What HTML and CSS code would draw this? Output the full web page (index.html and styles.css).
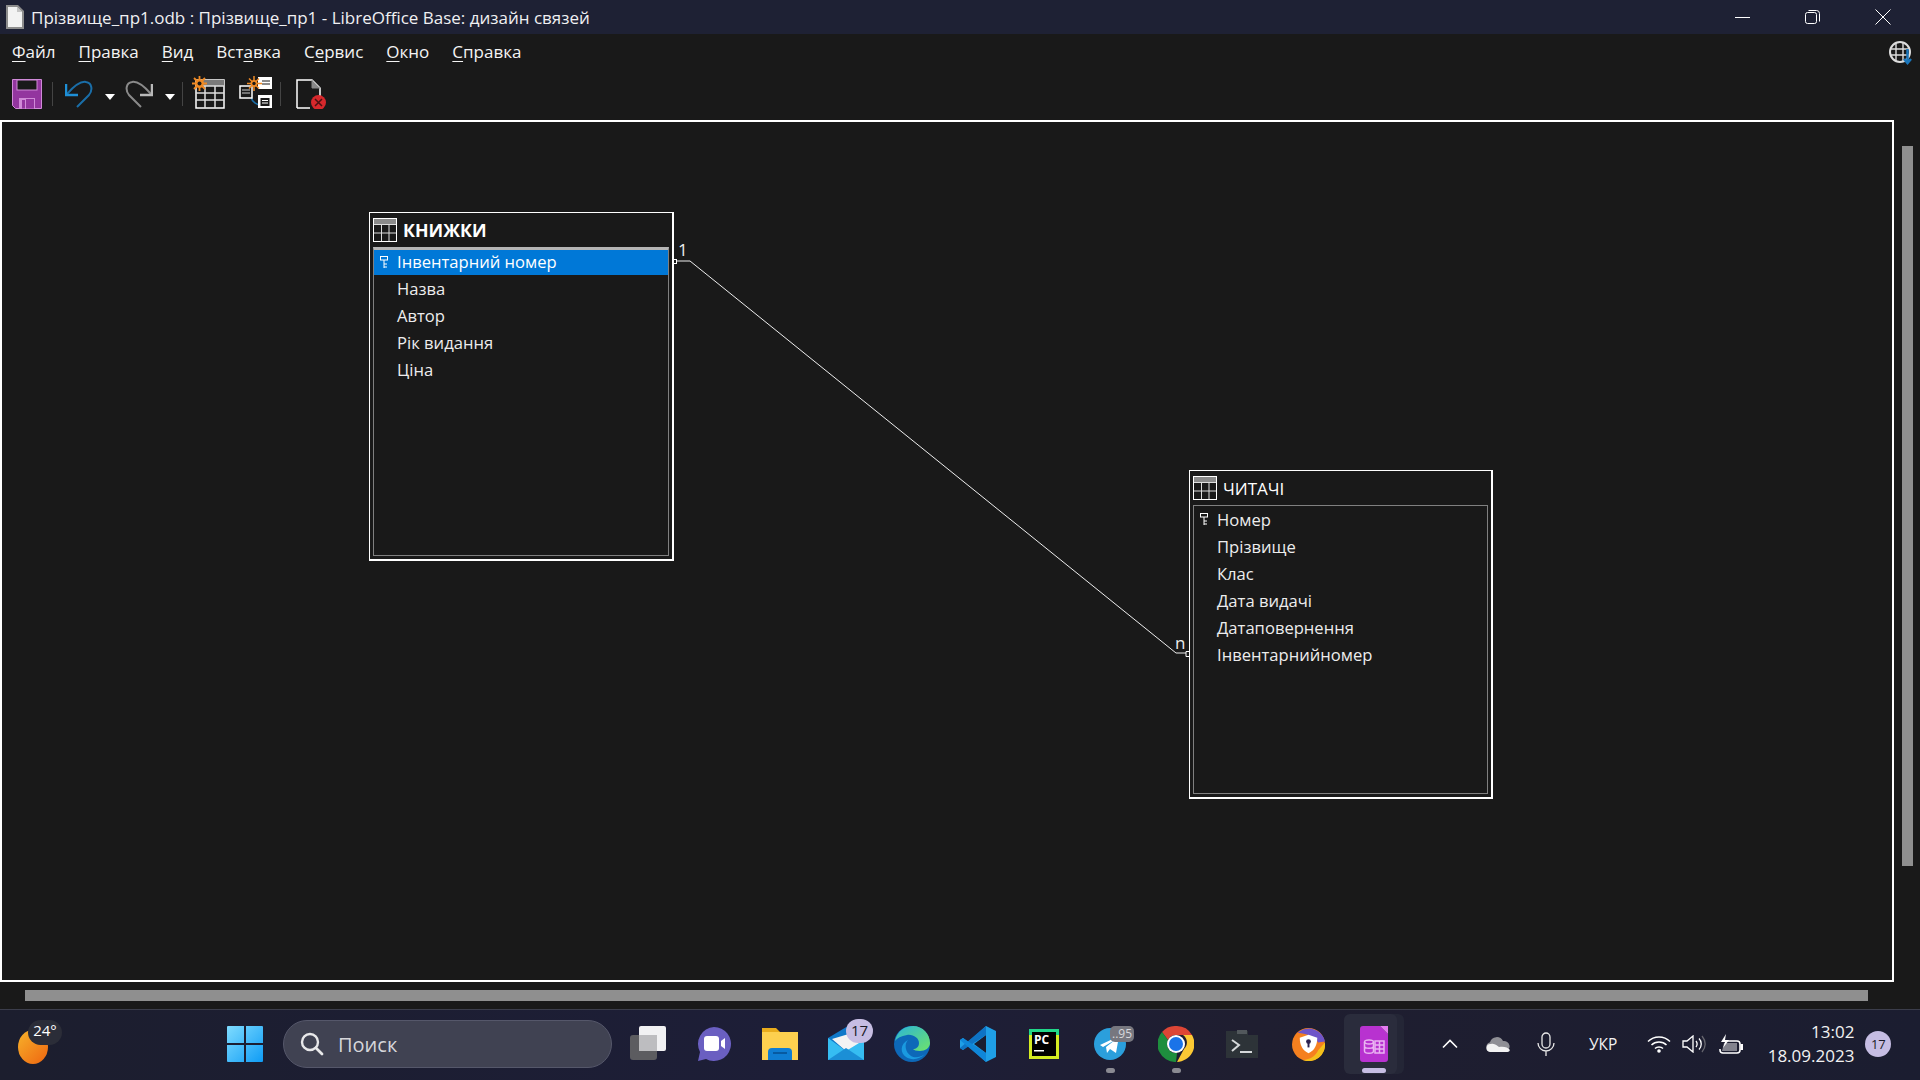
FILE: index.html
```html
<!DOCTYPE html>
<html lang="uk">
<head>
<meta charset="utf-8">
<title>LibreOffice Base</title>
<link rel="stylesheet" href="styles.css">
</head>
<body>
<div class="window">
  <header class="titlebar">
    <svg class="doc-icon" viewBox="0 0 20 24"><path d="M1 0h12l6 6v18H1z" fill="#8d8d8d"/><path d="M3 2h9l5 5v15H3z" fill="#f2f2f2"/><path d="M12 2l5 5h-5z" fill="#c4c4c4"/></svg>
    <span class="title-text">Прізвище_пр1.odb : Прізвище_пр1 - LibreOffice Base: дизайн связей</span>
    <div class="winctl">
      <svg class="ctl" viewBox="0 0 16 16"><path d="M0 8.500h15" stroke="#fff" fill="none"/></svg>
      <svg class="ctl" viewBox="0 0 16 16"><rect x="0.500" y="3.500" width="11" height="11" rx="2" stroke="#fff" fill="none"/><path d="M3.500 1.500h8a3 3 0 0 1 3 3v8" stroke="#fff" fill="none"/></svg>
      <svg class="ctl" viewBox="0 0 16 16"><path d="M0.500 0.500l15 15M15.500 0.500l-15 15" stroke="#fff" fill="none"/></svg>
    </div>
  </header>
  <nav class="menubar">
    <span class="mi"><u>Ф</u>айл</span>
    <span class="mi"><u>П</u>равка</span>
    <span class="mi"><u>В</u>ид</span>
    <span class="mi">Вст<u>а</u>вка</span>
    <span class="mi">С<u>е</u>рвис</span>
    <span class="mi"><u>О</u>кно</span>
    <span class="mi"><u>С</u>правка</span>
    <svg class="globe" viewBox="0 0 24 24"><circle cx="11" cy="11" r="10" fill="none" stroke="#ddd" stroke-width="2"/><path d="M1 8h20M1 14h20M7 2v18M14 2v18" stroke="#ddd" stroke-width="1.400"/><path d="M18.500 8v13M15 18l3.500 4 3.500-4" stroke="#1a76bb" stroke-width="2.500" fill="none"/></svg>
  </nav>
  <div class="toolbar">
    <svg class="t-save" viewBox="0 0 30 30"><path d="M0.500 0.500h29v29h-26l-3-3z" fill="#93359f" stroke="#d08ad8"/><rect x="5" y="1" width="20" height="10" fill="#191919" stroke="#d08ad8"/><rect x="7" y="19" width="16" height="10.500" fill="#d08ad8"/><rect x="10" y="21" width="3" height="8.500" fill="#93359f"/><rect x="14" y="20" width="8" height="9.500" fill="#93359f"/></svg>
    <span class="sep"></span>
    <svg class="t-arrow" viewBox="0 0 28 28"><path d="M2 14C10 5 16 1 21 2c6 1 7 8 3 13L12 27" fill="none" stroke="#1a6ea8" stroke-width="2"/><path d="M1 4v11h12" fill="none" stroke="#1e8fd6" stroke-width="2.500"/></svg>
    <span class="caret"></span>
    <svg class="t-arrow t-redo" viewBox="0 0 28 28"><path d="M26 14C18 5 12 1 7 2 1 3 0 10 4 15l12 12" fill="none" stroke="#8a8a8a" stroke-width="2"/><path d="M27 4v11H15" fill="none" stroke="#b9b9b9" stroke-width="2.500"/></svg>
    <span class="caret"></span>
    <span class="sep sep-b"></span>
    <svg class="t-table" viewBox="0 0 33 33"><rect x="4" y="4" width="28" height="28" fill="#191919" stroke="#fff" stroke-width="1.500"/><rect x="4" y="4" width="28" height="6" fill="#7a7a7a"/><path d="M4 10h28M4 17h28M4 24h28M13 10v22M23 10v22" stroke="#ddd" stroke-width="1.500"/><path d="M7.500 0v15M0 7.500h15M2 2l11 11M13 2L2 13" stroke="#f08a24" stroke-width="1.800"/><circle cx="7.500" cy="7.500" r="4.500" fill="#f08a24"/><circle cx="7.500" cy="7.500" r="2" fill="#191919"/></svg>
    <svg class="t-rel" viewBox="0 0 33 33"><path d="M12 21c1 5 6 8 10 8" stroke="#1a6ea8" stroke-width="1.500" fill="none"/><rect x="19" y="1" width="14" height="12" fill="#fff"/><path d="M23 5h8M23 8h8" stroke="#191919"/><rect x="1" y="10" width="12" height="12" fill="#191919" stroke="#fff" stroke-width="1.500"/><path d="M3 14h8M3 17h8" stroke="#ccc"/><rect x="19" y="19" width="14" height="13" fill="#fff"/><rect x="21.500" y="22" width="9" height="8" fill="#191919"/><path d="M23 24.500h6M23 27h6" stroke="#fff"/><path d="M15 0v15M8 7.500h15M10 2.500l10 10M20 2.500l-10 10" stroke="#f08a24" stroke-width="1.500"/><circle cx="15" cy="7.500" r="3.500" fill="#f08a24"/><circle cx="15" cy="7.500" r="1.700" fill="#191919"/></svg>
    <span class="sep sep-c"></span>
    <svg class="t-doc" viewBox="0 0 30 30"><path d="M1 29V1h15l8 8v13" fill="none" stroke="#fff" stroke-width="1.500"/><path d="M1 29h13" stroke="#fff" stroke-width="1.500"/><path d="M16 1v8h8" fill="#888" stroke="#888"/><circle cx="22.500" cy="23.500" r="7.500" fill="#d6282c"/><path d="M19 20l7 7M26 20l-7 7" stroke="#4a1012" stroke-width="1.500"/></svg>
  </div>
  <main class="workspace">
    <div class="canvas">
      <svg class="wire" viewBox="0 0 1893 861">
        <path d="M676 141h14L1176 533h10" fill="none" stroke="#eee" stroke-width="1"/>
        <rect x="673.500" y="139.500" width="3" height="4" fill="#191919" stroke="#fff"/>
        <path d="M1189 531.500h-3v5h3" fill="none" stroke="#fff"/>
      </svg>
      <span class="wire-label wl-1">1</span>
      <span class="wire-label wl-n">n</span>

      <section class="rel-table rt-books">
        <div class="rt-head">
          <svg class="rt-icon" viewBox="0 0 24 24"><rect x="0.500" y="0.500" width="23" height="23" fill="#191919" stroke="#fff"/><rect x="1" y="1" width="22" height="5" fill="#8a8a8a"/><path d="M1 6.500h22M1 15h22M8.500 6v17M16 6v17" stroke="#ddd"/></svg>
          <strong class="rt-name">КНИЖКИ</strong>
        </div>
        <ul class="rt-list rt-list-active">
          <li class="rt-row rt-sel"><svg class="key" viewBox="0 0 8 12"><rect x="0.500" y="0.500" width="7" height="3.500" fill="none" stroke="#fff"/><path d="M4 4v8M4 8h3M4 11h3" stroke="#fff"/></svg>Інвентарний номер</li>
          <li class="rt-row">Назва</li>
          <li class="rt-row">Автор</li>
          <li class="rt-row">Рік видання</li>
          <li class="rt-row">Ціна</li>
        </ul>
      </section>

      <section class="rel-table rt-readers">
        <div class="rt-head">
          <svg class="rt-icon" viewBox="0 0 24 24"><rect x="0.500" y="0.500" width="23" height="23" fill="#191919" stroke="#fff"/><rect x="1" y="1" width="22" height="5" fill="#8a8a8a"/><path d="M1 6.500h22M1 15h22M8.500 6v17M16 6v17" stroke="#ddd"/></svg>
          <span class="rt-name rt-plain">ЧИТАЧІ</span>
        </div>
        <ul class="rt-list">
          <li class="rt-row"><svg class="key" viewBox="0 0 8 12"><rect x="0.500" y="0.500" width="7" height="3.500" fill="none" stroke="#fff"/><path d="M4 4v8M4 8h3M4 11h3" stroke="#fff"/></svg>Номер</li>
          <li class="rt-row">Прізвище</li>
          <li class="rt-row">Клас</li>
          <li class="rt-row">Дата видачі</li>
          <li class="rt-row">Датаповернення</li>
          <li class="rt-row">Інвентарнийномер</li>
        </ul>
      </section>
    </div>
    <div class="vscroll"><span class="vthumb"></span></div>
  </main>
  <div class="hscroll"><span class="hthumb"></span></div>
</div>

<footer class="taskbar">
  <div class="weather">
    <span class="sun"></span>
    <span class="temp">24°</span>
  </div>
  <svg class="winlogo" viewBox="0 0 36 36"><defs><linearGradient id="wg" x1="0" y1="0" x2="1" y2="1"><stop offset="0" stop-color="#7fdcff"/><stop offset="1" stop-color="#0f9cf5"/></linearGradient></defs><path d="M0 1a1 1 0 0 1 1-1h16v17H0zM19 0h16a1 1 0 0 1 1 1v16H19zM0 19h17v17H1a1 1 0 0 1-1-1zM19 19h17v16a1 1 0 0 1-1 1H19z" fill="url(#wg)"/></svg>
  <div class="search">
    <svg class="search-ico" viewBox="0 0 24 24"><circle cx="10" cy="10" r="8" fill="none" stroke="#e8e8ea" stroke-width="2.400"/><path d="M16 16l6 6" stroke="#e8e8ea" stroke-width="2.800" stroke-linecap="round"/></svg>
    <span class="search-text">Поиск</span>
  </div>
  <div class="apps">
    <div class="app"><svg class="ico" viewBox="0 0 36 36"><rect x="0" y="9" width="27" height="25" rx="3" fill="#5c5c60"/><rect x="9" y="0" width="27" height="25" rx="2" fill="#f1f1f3"/><path d="M9 9h18v16H9z" fill="#bdbdc0"/></svg></div>
    <div class="app"><svg class="ico" viewBox="0 0 36 36"><path d="M18 1a17 17 0 1 1-8 32l-8 2 2-9A17 17 0 0 1 18 1z" fill="#6a5fc1"/><rect x="8" y="10" width="15" height="15" rx="3" fill="#fff"/><path d="M25 15l4-3v11l-4-3z" fill="#fff"/></svg></div>
    <div class="app"><svg class="ico" viewBox="0 0 36 36"><path d="M0 2h14l4 4h18v28H0z" fill="#e9ac1c"/><path d="M0 6h36v28H0z" fill="#fdd04f"/><path d="M6 34V26a4 4 0 0 1 4-4h16a4 4 0 0 1 4 4v8z" fill="#0f7dd2"/><path d="M11 27h14" stroke="#064f90" stroke-width="1.500"/></svg></div>
    <div class="app"><svg class="ico" viewBox="0 0 36 36"><path d="M0 12L20 0h16v34H0z" fill="#0f78c9"/><path d="M4 13L24 7l8 12-14 6z" fill="#f3f3f3"/><path d="M0 12l18 13 18-11v20H0z" fill="#36bdf2"/><path d="M0 34L18 22l18 12z" fill="#1b8fd6"/></svg><span class="badge">17</span></div>
    <div class="app"><svg class="ico" viewBox="0 0 36 36"><defs><linearGradient id="eg" x1="0" y1="0" x2="1" y2="1"><stop offset="0" stop-color="#2bb3d8"/><stop offset="1" stop-color="#6ee36a"/></linearGradient></defs><circle cx="18" cy="18" r="18" fill="#0d68b8"/><path d="M1 15C3 5 11 0 19 0c10 0 17 8 17 17 0 5-5 8-10 8-4 0-6-1-7-2 3 0 6-2 6-6 0-5-6-9-12-8C7 10 3 12 1 15z" fill="url(#eg)"/><path d="M14 14c-4 4-3 12 3 16 3 2 9 2 14-2-5 5-13 7-19 3C6 27 6 18 14 14z" fill="#1a9ae0"/></svg></div>
    <div class="app"><svg class="ico" viewBox="0 0 36 36"><path d="M26 0l10 5v26l-10 5L8 20l-5 4-3-2v-8l3-2 5 4z" fill="#1f9fe6"/><path d="M26 9L14 18l12 9z" fill="#1a1d30"/><path d="M26 0l-26 22 3 2L26 9z" fill="#0e73c4"/><path d="M26 36L0 14l3-2 23 15z" fill="#0f86d8"/></svg></div>
    <div class="app"><svg class="ico ico-pc" viewBox="0 0 30 30"><rect width="30" height="30" fill="#d4ec22"/><rect x="0" y="0" width="30" height="6" fill="#21d789"/><rect x="3" y="3" width="24" height="24" fill="#000"/><text x="5" y="15" class="pc-text">PC</text><rect x="5" y="21" width="10" height="1.500" fill="#fff"/></svg></div>
    <div class="app app-run"><svg class="ico ico-tg" viewBox="0 0 32 32"><circle cx="16" cy="16" r="16" fill="#2b9fdc"/><path d="M6 17L25 8l-3 17-6-4-3 4-1-6 9-7-12 7z" fill="#fff"/></svg><span class="badge badge-gray">..95</span></div>
    <div class="app app-run"><svg class="ico" viewBox="0 0 36 36"><path d="M18 0a18 18 0 0 1 16 9H18a9 9 0 0 0-8 5L4 6a18 18 0 0 1 14-6z" fill="#dd4636"/><path d="M34 9a18 18 0 0 1-15 27l7-13a9 9 0 0 0-1-14z" fill="#fcc934"/><path d="M4 6l6 8a9 9 0 0 0 9 13l-1 9A18 18 0 0 1 4 6z" fill="#1e8e3e"/><circle cx="18" cy="18" r="9" fill="#fff"/><circle cx="18" cy="18" r="7" fill="#1a73e8"/></svg></div>
    <div class="app"><svg class="ico ico-term" viewBox="0 0 32 28"><path d="M0 1h11l11 0v4h10v23H0z" fill="#2d3338"/><path d="M11 0h10v4H11z" fill="#52585c"/><path d="M6 10l7 5-7 6" fill="none" stroke="#d5d8da" stroke-width="2"/><path d="M14 22h12" stroke="#d5d8da" stroke-width="2"/></svg></div>
    <div class="app"><svg class="ico ico-av" viewBox="0 0 34 34"><circle cx="17" cy="17" r="17" fill="#f5801f"/><path d="M6 5a17 17 0 0 1 28 9l-7 1C24 8 14 6 6 5z" fill="#6e54c9"/><path d="M34 15a17 17 0 0 1-23 18c8 0 14-5 16-10z" fill="#f3c01b"/><path d="M17 7l9 3c0 8-3 13-9 16-6-3-9-8-9-16z" fill="#fff"/><circle cx="17" cy="14" r="2.500" fill="#2c2250"/><rect x="16" y="15" width="2" height="5" fill="#2c2250"/></svg></div>
    <div class="app app-active"><span class="stack"></span><span class="tile"></span><svg class="ico ico-lo" viewBox="0 0 28 36"><path d="M3 0h17l8 8v25a3 3 0 0 1-3 3H3a3 3 0 0 1-3-3V3a3 3 0 0 1 3-3z" fill="#b832d0"/><path d="M20 0h8v8z" fill="#e47cf0"/><g fill="none" stroke="#eab4f2" stroke-width="1.500"><ellipse cx="9" cy="16" rx="4.500" ry="2"/><path d="M4.500 16v9c0 3 9 3 9 0v-9M4.500 20c0 3 9 3 9 0"/><rect x="15" y="15" width="9" height="12"/><path d="M15 19h9M15 23h9M19.500 15v12"/></g></svg></div>
  </div>
  <div class="tray">
    <svg class="tr tr-chev" viewBox="0 0 16 10"><path d="M1 8.500l7-7 7 7" fill="none" stroke="#fff" stroke-width="1.600"/></svg>
    <svg class="tr tr-cloud" viewBox="0 0 24 16"><path d="M5 16a5 5 0 0 1-1-9.800A7 7 0 0 1 17 5a5.500 5.500 0 0 1 2 11z" fill="#8f8f95"/><path d="M4 16a4 4 0 0 1 1-8c4-1 6 2 8 3 4-1 9 0 11 3a3 3 0 0 1-3 2z" fill="#f2f2f2"/></svg>
    <svg class="tr tr-mic" viewBox="0 0 18 24"><rect x="5" y="1" width="8" height="15" rx="4" fill="none" stroke="#e8e8e8" stroke-width="1.300"/><path d="M1 11a8 8 0 0 0 16 0M9 19v5" fill="none" stroke="#e8e8e8" stroke-width="1.300"/></svg>
    <span class="lang">УКР</span>
    <svg class="tr tr-wifi" viewBox="0 0 24 18"><g fill="none" stroke="#fff" stroke-width="1.500"><path d="M1 6.500c6-6 16-6 22 0"/><path d="M4.500 10c4-4 11-4 15 0"/><path d="M8 13.500c2-2 6-2 8 0"/></g><circle cx="12" cy="16" r="1.800" fill="#fff"/></svg>
    <svg class="tr tr-vol" viewBox="0 0 24 18"><path d="M1 6h4l6-5v16l-6-5H1z" fill="none" stroke="#fff" stroke-width="1.300"/><path d="M14 6c1.500 2 1.500 4 0 6M17 3.500c3 3 3 8 0 11" fill="none" stroke="#fff" stroke-width="1.300"/><path d="M20 1c4 5 4 11 0 16" fill="none" stroke="#66666e" stroke-width="1.300"/></svg>
    <svg class="tr tr-bat" viewBox="0 0 24 20"><path d="M4 7h14a3 3 0 0 1 3 3v6a3 3 0 0 1-3 3H4a3 3 0 0 1-3-3v-1" fill="none" stroke="#fff" stroke-width="1.600"/><path d="M5 9h13v8H3z" fill="#fff" opacity=".45"/><path d="M21.500 10h2.500v6h-2.500z" fill="#fff"/><path d="M7 0L2 8h4l-2 6 6-8H6z" fill="#fff"/></svg>
    <div class="clock"><span>13:02</span><span>18.09.2023</span></div>
    <span class="notif">17</span>
  </div>
</footer>
</body>
</html>
```
FILE: styles.css
```css
* { box-sizing: border-box; }
html, body { margin: 0; padding: 0; }
body {
  width: 1920px; height: 1080px; overflow: hidden;
  background: #191919; color: #fff;
  font-family: "Open Sans", "Noto Sans", sans-serif;
  display: flex; flex-direction: column;
}
.window { flex: 1; display: flex; flex-direction: column; min-height: 0; }

.titlebar { height: 34px; background: #1e2134; display: flex; align-items: center; padding-left: 5px; }
.doc-icon { width: 20px; height: 24px; margin-right: 6px; }
.title-text { font-size: 17px; color: #f0f0f2; white-space: nowrap; }
.winctl { margin-left: auto; display: flex; gap: 54px; padding-right: 29px; }
.ctl { width: 16px; height: 16px; display: block; }

.menubar { height: 36px; display: flex; align-items: center; padding: 0 0 2px 12px; gap: 23px; position: relative; }
.mi { font-size: 17px; color: #f4f4f4; }
.mi u { text-underline-offset: 3px; }
.globe { width: 24px; height: 24px; margin-left: auto; margin-right: 7px; margin-top: 4px; }

.toolbar { height: 50px; display: flex; align-items: flex-start; padding-left: 12px; }
.t-save { width: 30px; height: 30px; margin-top: 9px; }
.sep { width: 1px; height: 24px; background: #444; margin: 12px 0 0 10px; }
.t-arrow { width: 28px; height: 28px; margin: 10px 0 0 12px; }
.caret { width: 0; height: 0; border: 5px solid transparent; border-top: 6px solid #fff; border-bottom: 0; margin: 24px 0 0 12px; }
.caret + .t-arrow { margin-left: 10px; }
.sep-b { margin-left: 7px; }
.t-table { width: 33px; height: 33px; margin: 6px 0 0 9px; }
.t-rel { width: 33px; height: 33px; margin: 6px 0 0 14px; }
.sep-c { margin-left: 8px; }
.t-doc { width: 30px; height: 30px; margin: 9px 0 0 15px; }

.workspace { display: flex; height: 864px; }
.canvas { position: relative; width: 1894px; height: 862px; border: 2px solid #fff; background: #191919; }
.vscroll { flex: 1; padding: 26px 0 0 8px; }
.vthumb { display: block; width: 11px; height: 720px; background: #8f8f8f; }
.hscroll { height: 25px; padding: 6px 0 0 25px; }
.hthumb { display: block; width: 1843px; height: 11px; background: #8f8f8f; }

.wire { position: absolute; left: -2px; top: -2px; width: 1893px; height: 861px; }
.wire-label { position: absolute; font-size: 17px; line-height: 18px; color: #eee; }
.wl-1 { left: 676px; top: 119px; }
.wl-n { left: 1173px; top: 512px; }

.rel-table { position: absolute; padding: 0 3px 3px 3px; border: 2px solid #fff; border-top-width: 1px; border-left-width: 1px; }
.rt-books { left: 367px; top: 90px; width: 305px; height: 349px; }
.rt-readers { left: 1187px; top: 348px; width: 304px; height: 329px; }
.rt-head { height: 34px; display: flex; align-items: center; padding-left: 1px; margin-left: -1px; }
.rt-icon { width: 24px; height: 24px; }
.rt-name { font-size: 17.800px; margin-left: 6px; font-weight: 700; color: #fff; }
.rt-plain { font-weight: 400; font-size: 17px; }
.rt-list { list-style: none; margin: 0; padding: 1px 0 0 0; height: calc(100% - 34px); border: 1px solid #808080; }
.rt-list-active { border-top: 3px solid #b5b5b5; padding-top: 0; }
.rt-row { position: relative; height: 27px; line-height: 26px; font-size: 16.600px; padding-left: 23px; color: #ededed; white-space: nowrap; }
.rt-sel { background: #0078d7; color: #fff; height: 25px; line-height: 24px; margin-bottom: 1px; }
.key { position: absolute; left: 6px; top: 6px; width: 8px; height: 12px; }

.taskbar {
  height: 71px; flex: none; display: flex; align-items: center; padding-bottom: 2px;
  border-top: 1px solid #3b3d4b;
  background: linear-gradient(90deg, #1c1e2e, #1d1e38 45%, #1f1e30 65%, #1b1d30);
  position: relative;
}
.weather { position: relative; width: 227px; height: 100%; flex: none; }
.sun { position: absolute; left: 18px; top: 20px; width: 30px; height: 34px; border-radius: 50%; background: linear-gradient(135deg, #f7b32b, #ee6510); }
.temp { position: absolute; left: 28px; top: 10px; width: 34px; height: 25px; border-radius: 13px; background: #2b2d38; font-size: 15px; line-height: 21px; text-align: center; color: #fff; }
.winlogo { width: 36px; height: 36px; flex: none; }
.search { flex: none; width: 329px; height: 48px; margin-left: 20px; border-radius: 24px; background: #404252; border: 1px solid #55576a; display: flex; align-items: center; padding-left: 16px; }
.search-ico { width: 24px; height: 24px; }
.search-text { margin-left: 14px; font-size: 20px; color: #d6d6da; }
.apps { display: flex; margin-left: 3px; flex: none; }
.app { position: relative; width: 66px; height: 68px; display: flex; align-items: center; justify-content: center; }
.ico { width: 36px; height: 36px; position: relative; }
.ico-pc { width: 30px; height: 30px; }
.pc-text { font: 700 12px "Open Sans", sans-serif; fill: #fff; }
.ico-tg { width: 32px; height: 32px; }
.ico-term { width: 32px; height: 28px; }
.ico-av { width: 33px; height: 33px; }
.ico-lo { width: 28px; height: 36px; }
.badge { position: absolute; left: 33px; top: 9px; min-width: 27px; height: 24px; border-radius: 12px; background: #c6bde3; color: #1b1b26; font-size: 15px; line-height: 23px; text-align: center; }
.badge-gray { left: 33px; top: 16px; min-width: 22px; height: 16px; border-radius: 5px; background: #77777f; color: #d8d8dc; font-size: 12px; line-height: 15px; padding: 0 2px; }
.app-run::after { content: ""; position: absolute; left: 29px; bottom: 5px; width: 9px; height: 5px; border-radius: 3px; background: #8a8a92; }
.app-active::after { content: ""; position: absolute; left: 21px; bottom: 5px; width: 24px; height: 5px; border-radius: 3px; background: #c6bde3; }
.tile { position: absolute; left: 3px; top: 4px; width: 53px; height: 60px; border-radius: 6px; background: #2a2c3c; }
.stack { position: absolute; left: 12px; top: 4px; width: 51px; height: 60px; border-radius: 6px; background: #242636; }

.tray { display: flex; align-items: center; margin-left: 35px; flex: none; }
.tr { display: block; flex: none; }
.tr-chev { width: 16px; height: 10px; }
.tr-cloud { width: 24px; height: 16px; margin-left: 28px; }
.tr-mic { width: 18px; height: 24px; margin-left: 27px; }
.lang { font-size: 15.500px; margin-left: 34px; color: #f2f2f2; }
.tr-wifi { width: 24px; height: 18px; margin-left: 30px; }
.tr-vol { width: 24px; height: 18px; margin-left: 11px; }
.tr-bat { width: 24px; height: 20px; margin-left: 13px; }
.clock { display: flex; flex-direction: column; align-items: flex-end; width: 100px; margin-left: 11px; font-size: 17px; line-height: 24px; color: #f2f2f2; }
.notif { width: 26px; height: 26px; margin-left: 11px; border-radius: 50%; background: #c6bde3; color: #1b1b26; font-size: 13px; line-height: 26px; text-align: center; }
```
